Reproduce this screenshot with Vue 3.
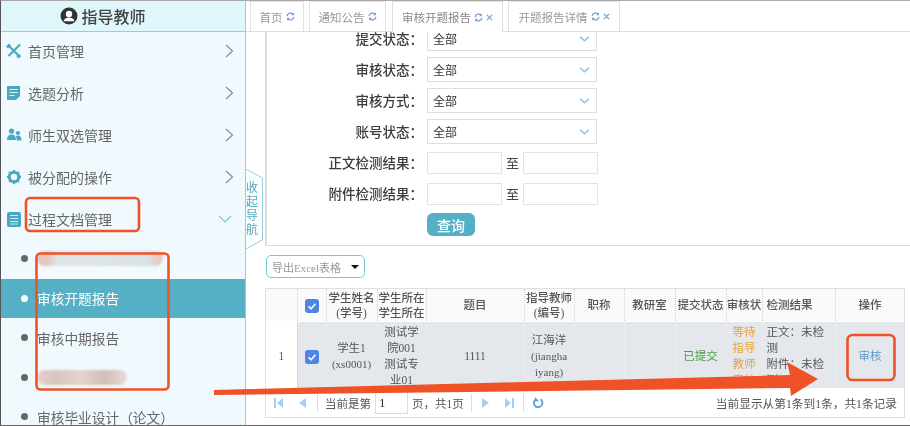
<script setup>
const menus = [
  { name: '首页管理', icon: 'tools' },
  { name: '选题分析', icon: 'note' },
  { name: '师生双选管理', icon: 'users' },
  { name: '被分配的操作', icon: 'gear' },
  { name: '过程文档管理', icon: 'doc', open: true }
]
const subs = [
  { smudge: 'long' },
  { name: '审核开题报告', active: true },
  { name: '审核中期报告' },
  { smudge: 'short' },
  { name: '审核毕业设计（论文）' }
]
const tabs = [
  { name: '首页', w: 54 },
  { name: '通知公告', w: 77 },
  { name: '审核开题报告', w: 111, close: true, active: true },
  { name: '开题报告详情', w: 112, close: true }
]
const selects = ['提交状态', '审核状态', '审核方式', '账号状态']
const ranges = ['正文检测结果', '附件检测结果']
const cols = [31, 29, 51, 49, 98, 50, 50, 51, 51, 36, 73, 70]
</script>

<template>
  <div class="app">
    <aside class="side">
      <header class="side-head">
        <svg class="user" viewBox="0 0 18 18" width="18" height="18">
          <circle cx="9" cy="9" r="8.500" fill="#333" />
          <circle cx="9" cy="7" r="3.200" fill="#fff" />
          <path d="M3.400 14.200c1-2.600 3.200-3.600 5.600-3.600s4.600 1 5.600 3.600z" fill="#fff" />
        </svg>
        <span>指导教师</span>
      </header>
      <ul class="menu">
        <li v-for="m in menus" :key="m.name" class="menu-item">
          <svg class="mi" viewBox="0 0 16 16" width="16" height="16">
            <g v-if="m.icon === 'tools'" fill="none" stroke="#4aa8c0" stroke-width="2.200">
              <path d="M2 2l12 12" />
              <path d="M14 1.500L2.500 13" />
              <path d="M1 4.500l3-3M11 14l3.500-1.500" stroke-width="2.600" />
            </g>
            <g v-else-if="m.icon === 'note'">
              <path d="M1 1h13v10l-4 4H1z" fill="#4aa8c0" />
              <path d="M3.500 4.500h8M3.500 7.500h8M3.500 10.500h5" stroke="#e8f6fa" stroke-width="1.200" />
            </g>
            <g v-else-if="m.icon === 'users'" fill="#4aa8c0">
              <circle cx="5.500" cy="4" r="2.600" />
              <circle cx="12" cy="6" r="2.100" />
              <path d="M1 13c0-4 2-5.500 4.500-5.500S10 9 10 13z" />
              <path d="M10.800 13.500c0-2-.4-3-1-4 .8-.8 1.500-1 2.400-1 2 0 3.300 1.500 3.300 5z" />
            </g>
            <g v-else-if="m.icon === 'gear'">
              <circle cx="8" cy="8" r="4.700" fill="none" stroke="#4aa8c0" stroke-width="3" />
              <path d="M8 1v14M1 8h14M3 3l10 10M13 3L3 13" stroke="#4aa8c0" stroke-width="2" stroke-dasharray="2.200 9.600 2.200" />
            </g>
            <g v-else>
              <rect x="1" y="1" width="14" height="15" rx="2" fill="#4aa8c0" />
              <path d="M4 4.500h8M4 7.500h8M4 10.500h8M4 13h8" stroke="#cdeaf2" stroke-width="1.200" />
            </g>
          </svg>
          <span class="mt">{{ m.name }}</span>
          <svg v-if="m.open" class="chev-down" viewBox="0 0 14 8" width="14" height="8">
            <path d="M1 1l6 6 6-6" fill="none" stroke="#7cc5d8" stroke-width="1.100" />
          </svg>
          <svg v-else class="chev" viewBox="0 0 9 14" width="9" height="14">
            <path d="M1 1l6.500 6L1 13" fill="none" stroke="#888" stroke-width="1.100" />
          </svg>
        </li>
      </ul>
      <ul class="subs">
        <li v-for="(s, i) in subs" :key="i" class="sub" :class="{ on: s.active }">
          <i class="dot"></i>
          <span v-if="s.smudge" class="smudge" :class="s.smudge"></span>
          <span v-else>{{ s.name }}</span>
        </li>
      </ul>
    </aside>

    <main class="main">
      <nav class="tabs">
        <div v-for="t in tabs" :key="t.name" class="tab" :class="{ on: t.active }" :style="{ width: t.w + 'px' }">
          <span>{{ t.name }}</span>
          <svg class="ref" viewBox="0 0 10 10" width="9" height="9">
            <path d="M1.200 4.500A3.900 3.900 0 0 1 8 2.500M8.800 5.500A3.900 3.900 0 0 1 2 7.500" fill="none" stroke="#6f9fd8" stroke-width="1.400" />
            <path d="M8.800 .6v3H5.800zM1.200 9.400v-3h3z" fill="#6f9fd8" />
          </svg>
          <svg v-if="t.close" class="x" viewBox="0 0 8 8" width="7" height="7">
            <path d="M1 1l6 6M7 1L1 7" stroke="#6f9fd8" stroke-width="1.300" />
          </svg>
        </div>
      </nav>

      <section class="panel">
        <form class="form">
          <template v-for="s in selects" :key="s">
            <label class="lab">{{ s }}：</label>
            <div class="sel">
              <span>全部</span>
              <svg viewBox="0 0 12 7" width="11" height="6"><path d="M1 1l5 4.500L11 1" fill="none" stroke="#8fc0ee" stroke-width="1.800" /></svg>
            </div>
          </template>
          <template v-for="r in ranges" :key="r">
            <label class="lab">{{ r }}：</label>
            <div class="range"><i class="box"></i><span class="to">至</span><i class="box"></i></div>
          </template>
          <span></span>
          <div class="btn-cell"><button type="button" class="query">查询</button></div>
        </form>
      </section>

      <div class="export">
        <span>导出Excel表格</span>
        <i class="caret"></i>
      </div>

      <div class="grid">
        <div class="table-clip">
          <table>
            <colgroup><col v-for="(c, i) in cols" :key="i" :style="{ width: c + 'px' }" /></colgroup>
            <thead>
              <tr>
                <th></th>
                <th><i class="check"><svg viewBox="0 0 14 14" width="14" height="14"><path d="M3.500 7.300l2.500 2.500 4.500-5" fill="none" stroke="#fff" stroke-width="1.500" /></svg></i></th>
                <th>学生姓名<br />(学号)</th>
                <th>学生所在<br />学生所在</th>
                <th>题目</th>
                <th>指导教师<br />(编号)</th>
                <th>职称</th>
                <th>教研室</th>
                <th>提交状态</th>
                <th class="clip-cell">审核状</th>
                <th class="left">检测结果</th>
                <th>操作</th>
              </tr>
            </thead>
            <tbody>
              <tr>
                <td class="num">1</td>
                <td><i class="check"><svg viewBox="0 0 14 14" width="14" height="14"><path d="M3.500 7.300l2.500 2.500 4.500-5" fill="none" stroke="#fff" stroke-width="1.500" /></svg></i></td>
                <td>学生1<br /><small>(xs0001)</small></td>
                <td>测试学<br />院001<br />测试专<br />业01</td>
                <td>1111</td>
                <td>江海洋<br /><small>(jiangha<br />iyang)</small></td>
                <td></td>
                <td></td>
                <td class="green">已提交</td>
                <td class="orange">等待<br />指导<br />教师<br />审核</td>
                <td class="left">正文：未检<br />测<br />附件：未检<br />测</td>
                <td class="blue">审核</td>
              </tr>
            </tbody>
          </table>
        </div>
        <footer class="pager">
          <div class="pg-left">
            <svg class="pi" viewBox="0 0 10 12" width="10" height="12"><path d="M0 1h2v10H0zM9 1v10L3 6z" fill="#a9cdf0" /></svg>
            <svg class="pi" viewBox="0 0 10 12" width="10" height="12"><path d="M8 1v10L1 6z" fill="#a9cdf0" /></svg>
            <i class="sep"></i>
            <span>当前是第</span>
            <i class="pinput">1</i>
            <span>页，共1页</span>
            <i class="sep"></i>
            <svg class="pi" viewBox="0 0 10 12" width="10" height="12"><path d="M2 1v10l7-5z" fill="#a9cdf0" /></svg>
            <svg class="pi" viewBox="0 0 10 12" width="10" height="12"><path d="M1 1v10l6-5zM8 1h2v10H8z" fill="#a9cdf0" /></svg>
            <i class="sep"></i>
            <svg viewBox="0 0 12 12" width="12" height="12"><path d="M8.500 2.300A4.300 4.300 0 1 1 4 2.200" fill="none" stroke="#5b9bd8" stroke-width="1.700" /><path d="M3 0v4.200h4z" fill="#5b9bd8" /></svg>
          </div>
          <span class="summary">当前显示从第1条到1条，共1条记录</span>
        </footer>
      </div>
    </main>

    <div class="fold">
      <svg viewBox="0 0 18 82" width="18" height="82">
        <path d="M0 0L16.500 9v62L0 80z" fill="#fbfeff" />
        <path d="M0 0L16.500 9v62L0 80" fill="none" stroke="#8fd0e0" stroke-width="1" />
      </svg>
      <span class="fold-text">收<br />起<br />导<br />航</span>
    </div>

    <svg class="marks" viewBox="0 0 910 426" width="910" height="426">
      <g fill="none" stroke="#f05228" stroke-width="2.600">
        <rect x="26" y="198" width="113" height="33" rx="4" />
        <rect x="36.500" y="253.500" width="132" height="136" rx="4" />
        <rect x="847.500" y="335" width="47" height="45" rx="5" />
      </g>
      <path d="M214 390L790 375 787 362 818 379 791 396 790 388 214 395z" fill="#f05228" />
    </svg>
  </div>
</template>

<style scoped>
.app {
  position: relative;
  display: flex;
  width: 910px;
  height: 426px;
  overflow: hidden;
  box-sizing: border-box;
  border-top: 1px solid #aaa;
  border-left: 1px solid #555;
  border-bottom: 1px solid #666;
  background: #fff;
  color: #555;
  font-family: "Liberation Serif", "Noto Sans CJK SC", serif;
  filter: blur(0.35px);
}
.side {
  flex: none;
  width: 245px;
  height: 100%;
  box-sizing: border-box;
  overflow: hidden;
  background: #f0f9fd;
  border-right: 1px solid #8fd0e0;
}
.side-head {
  display: flex;
  align-items: center;
  justify-content: center;
  gap: 3px;
  height: 30px;
  padding-right: 40px;
  background: #dff6fb;
  border-bottom: 1px solid #8fd0e0;
  color: #444;
  font-size: 16px;
  font-weight: 500;
}
.menu, .subs { list-style: none; margin: 0; padding: 0; }
.menu { margin-top: -2px; }
.subs { margin-top: -1px; }
.menu-item {
  display: flex;
  align-items: center;
  height: 42px;
  padding-left: 5px;
  font-size: 14px;
  color: #666;
}
.mi { flex: none; margin-right: 6px; }
.mt { flex: 1; }
.chev { margin-right: 11px; }
.chev-down { margin-right: 13px; }
.sub {
  display: flex;
  align-items: center;
  height: 39.500px;
  padding-left: 20px;
  font-size: 13.700px;
  color: #666;
  white-space: nowrap;
}
.sub.on { background: #55b0c6; color: #fff; }
.dot {
  flex: none;
  width: 7px;
  height: 7px;
  margin-right: 9px;
  border-radius: 50%;
  background: #666;
}
.sub.on .dot { background: #fff; }
.smudge { display: block; height: 15px; border-radius: 8px; filter: blur(1px); }
.smudge.long {
  width: 126px;
  background: linear-gradient(90deg, #e8c4bc 0, #e8c4bc 8%, #e0e4e6 16%, #dde2e5 88%, #e8cbc4 96%);
}
.smudge.short {
  width: 90px;
  background: linear-gradient(90deg, #e8cfca, #d8c4c0 20%, #e6d2ce 50%, #d2bdb9 75%, #eadbd8);
}

.main {
  flex: 1;
  min-width: 0;
  display: flex;
  flex-direction: column;
}
.tabs {
  flex: none;
  display: flex;
  align-items: flex-end;
  gap: 5px;
  height: 30px;
  padding-left: 4px;
  border-bottom: 1px solid #ddd;
}
.tab {
  position: relative;
  display: flex;
  align-items: center;
  justify-content: center;
  gap: 3px;
  box-sizing: border-box;
  height: 30px;
  border: 1px solid #e2e2e2;
  border-bottom: none;
  font-size: 11.500px;
  color: #999;
  white-space: nowrap;
}
.tab.on { height: 31px; margin-bottom: -1px; background: #fff; color: #888; border-color: #ddd; }
.tab:nth-child(3) { margin-left: 1px; }
.x { margin-left: 0; }

.panel {
  flex: none;
  height: 214px;
  margin-left: 19px;
  box-sizing: border-box;
  overflow: hidden;
  border-left: 2px solid #ddd;
  border-bottom: 1px solid #ddd;
}
.form {
  display: grid;
  grid-template-columns: 160px 1fr;
  grid-auto-rows: 31px;
  margin-top: -9px;
}
.lab {
  align-self: center;
  justify-self: end;
  margin-bottom: 2px;
  padding-right: 4px;
  color: #3c3c3c;
  font-size: 13.500px;
  font-weight: 500;
  white-space: nowrap;
}
.sel {
  align-self: center;
  display: flex;
  align-items: center;
  justify-content: space-between;
  box-sizing: border-box;
  width: 170px;
  height: 25px;
  padding: 0 6px 0 5px;
  border: 1.500px solid #ddd;
  font-size: 12px;
  color: #333;
}
.range { display: flex; align-items: center; font-size: 13px; color: #444; }
.box {
  display: block;
  box-sizing: border-box;
  width: 75px;
  height: 22px;
  border: 1.500px solid #e2e2e2;
}
.to { width: 21px; text-align: center; }
.btn-cell { padding-top: 4px; }
.query {
  display: block;
  width: 48px;
  height: 23px;
  padding: 0;
  border: none;
  border-radius: 6px;
  background: #55b0c6;
  color: #fff;
  font: 500 14px "Noto Sans CJK SC", sans-serif;
}
.export {
  flex: none;
  display: flex;
  align-items: center;
  justify-content: space-between;
  box-sizing: border-box;
  width: 99px;
  height: 23px;
  margin: 9px 0 10px 20px;
  padding: 0 5px;
  border: 1px solid #7cc5d8;
  border-radius: 5px;
  font-size: 11px;
  color: #999;
}
.caret {
  width: 0;
  height: 0;
  border-left: 4px solid transparent;
  border-right: 4px solid transparent;
  border-top: 4px solid #111;
}
.grid {
  flex: none;
  width: 640px;
  height: 130px;
  margin-left: 19px;
  box-sizing: border-box;
  border: 1px solid #e0e0e0;
  display: flex;
  flex-direction: column;
}
.table-clip { flex: none; height: 99px; overflow: hidden; }
table {
  width: 638px;
  table-layout: fixed;
  border-collapse: collapse;
  font-size: 11.500px;
  color: #555;
}
th {
  height: 31px;
  padding: 1px 0 0;
  font-weight: 500;
  line-height: 15px;
  background: #fafafa;
  border-right: 1px dotted #ccc;
  border-bottom: 1px solid #fff;
  white-space: nowrap;
  overflow: hidden;
}
td {
  height: 67px;
  padding: 0;
  text-align: center;
  line-height: 16px;
  background: #e4e8ec;
  border-right: 1px dotted #f0f0f0;
  white-space: nowrap;
}
td small { font-size: 11px; }
td.num { background: #fff; border-right: 1px dotted #ccc; }
.left { text-align: left; padding-left: 4px; }
.green { color: #4a9e3c; }
.orange { color: #e3a33c; }
.blue { color: #5b9bd0; }
.check {
  display: inline-block;
  width: 14px;
  height: 14px;
  border-radius: 3px;
  background: #4d84e8;
  vertical-align: middle;
}
.check svg { display: block; }
.pager {
  flex: 1;
  display: flex;
  align-items: center;
  justify-content: space-between;
  padding: 0 7px 0 8px;
  font-size: 11.500px;
  color: #555;
  white-space: nowrap;
}
.summary { font-size: 11.700px; }
.pg-left { display: flex; align-items: center; }
.pi { margin-right: 14px; }
.sep { width: 1px; height: 18px; margin-right: 7px; background: #ddd; }
.pi + .sep { margin-left: -5px; margin-right: 8px; }
.pg-left > .pi:nth-child(2) + .sep { margin-right: 7px; }
.pinput {
  box-sizing: border-box;
  width: 33px;
  height: 23px;
  margin: 0 4px;
  padding-left: 3px;
  border: 1px solid #ddd;
  font: 13px/21px "Liberation Serif", serif;
  color: #333;
}
.pg-left span + .sep { margin-left: 7px; margin-right: 8px; }

.fold {
  position: absolute;
  left: 245px;
  top: 168px;
  width: 18px;
  height: 82px;
}
.fold svg { display: block; }
.fold-text {
  position: absolute;
  left: 0;
  top: 12px;
  width: 12px;
  text-align: center;
  font-size: 12px;
  line-height: 14px;
  color: #55a8b8;
}
.marks { position: absolute; left: -1px; top: -1px; pointer-events: none; }
</style>
